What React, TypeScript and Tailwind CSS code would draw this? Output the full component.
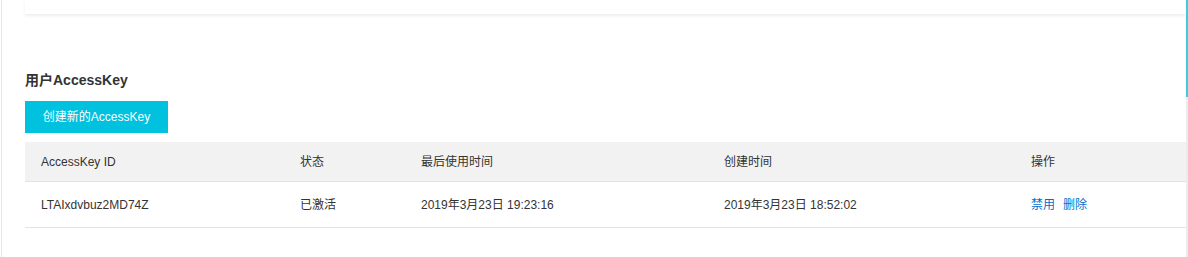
const COLS = "grid grid-cols-[259px_121px_303px_307px_1fr]";

const HEADERS = ["AccessKey ID", "状态", "最后使用时间", "创建时间", "操作"];

const KEYS = [
  {
    id: "LTAIxdvbuz2MD74Z",
    status: "已激活",
    lastUsed: "2019年3月23日 19:23:16",
    created: "2019年3月23日 18:52:02",
  },
];

export default function App() {
  return (
    <div
      className="flex h-[257px] w-[1188px] bg-white text-[#333] overflow-hidden"
      style={{ fontFamily: '"Liberation Sans", "Noto Sans CJK SC", sans-serif' }}
    >
      {/* left rule */}
      <div className="ml-px w-px bg-[#e6e6e6]" />

      <div className="flex-1 pl-[23px] flex flex-col">
        {/* previous panel (cut off) */}
        <div className="h-[14px] bg-white shadow-[0_2px_3px_rgba(0,0,0,0.07)]" />

        <h2 className="mt-[56px] h-5 text-sm font-bold leading-5 text-[#333]">
          用户AccessKey
        </h2>

        <button className="mt-[11px] h-8 w-[143px] bg-[#00c1de] text-xs text-white">
          创建新的AccessKey
        </button>

        {/* table */}
        <div className="mt-[9px] text-xs">
          <div className={`${COLS} h-[40px] items-center bg-[#f2f2f2] border-b border-[#e3e3e3]`}>
            {HEADERS.map((h) => (
              <div key={h} className="pl-4">
                {h}
              </div>
            ))}
          </div>
          {KEYS.map((k) => (
            <div key={k.id} className={`${COLS} h-[46px] items-center border-b border-[#e3e3e3]`}>
              <div className="pl-4">{k.id}</div>
              <div className="pl-4">{k.status}</div>
              <div className="pl-4">{k.lastUsed}</div>
              <div className="pl-4">{k.created}</div>
              <div className="pl-4 flex gap-2 text-[#0070cc]">
                <a className="cursor-pointer">禁用</a>
                <a className="cursor-pointer">删除</a>
              </div>
            </div>
          ))}
        </div>
      </div>

      {/* right rule */}
      <div className="w-[2px] flex flex-col">
        <div className="h-[97px] bg-[#3fcbe0]" />
        <div className="flex-1 bg-[#ececec]" />
      </div>
    </div>
  );
}
